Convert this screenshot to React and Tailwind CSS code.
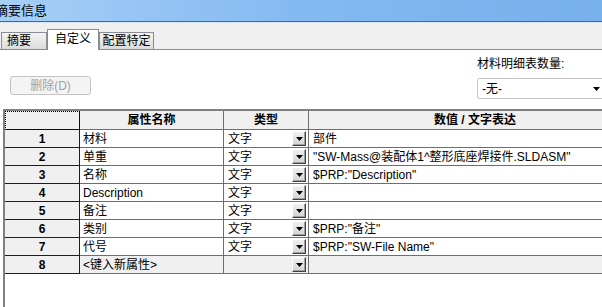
const rows = [
  { n: 1, name: '材料', type: '文字', value: '部件' },
  { n: 2, name: '单重', type: '文字', value: '"SW-Mass@装配体1^整形底座焊接件.SLDASM"' },
  { n: 3, name: '名称', type: '文字', value: '$PRP:"Description"' },
  { n: 4, name: 'Description', type: '文字', value: '' },
  { n: 5, name: '备注', type: '文字', value: '' },
  { n: 6, name: '类别', type: '文字', value: '$PRP:"备注"' },
  { n: 7, name: '代号', type: '文字', value: '$PRP:"SW-File Name"' },
];

function DropButton() {
  return (
    <div className="w-[14px] h-[15px] flex items-end justify-center pb-[4px] bg-linear-to-b from-[#f0f0f0] to-[#d4d4d4] border border-t-white border-l-white border-r-[#404040] border-b-[#404040] shadow-[inset_-1px_-1px_0_#a0a0a0]">
      <svg width="7" height="4" viewBox="0 0 7 4">
        <path d="M0 0H7L3.5 4Z" fill="#000" />
      </svg>
    </div>
  );
}

function Row({ n, name, type, value, blank }) {
  const bg = blank ? 'bg-[#f0f0f0]' : 'bg-white';
  return (
    <div className="flex h-[18px] shrink-0">
      <div className="w-[75px] shrink-0 bg-[#f0f0f0] border-r border-b border-[#1e1e1e] flex items-center justify-center font-bold">
        {n}
      </div>
      <div className={`w-[144px] shrink-0 border-r border-b border-[#6e6e6e] pl-[3px] flex items-center ${bg}`}>
        {name}
      </div>
      <div className={`w-[85px] shrink-0 border-r border-b border-[#6e6e6e] pl-[4px] pr-[2px] flex items-center justify-between ${bg}`}>
        <span>{type}</span>
        <DropButton />
      </div>
      <div className={`w-[332px] shrink-0 border-b border-[#6e6e6e] pl-[4px] flex items-center whitespace-nowrap ${bg}`}>
        {value}
      </div>
    </div>
  );
}

export default function App() {
  return (
    <div className="w-[602px] h-[307px] overflow-hidden bg-white flex flex-col text-[12px] leading-[14px] text-black [font-family:'Liberation_Sans','Noto_Sans_CJK_SC',sans-serif]">
      <div className="h-[22px] shrink-0 border-b border-[#3f6a9a] bg-linear-to-r from-[#a6cff6] via-[#84b9f1] to-[#78b0ec] flex items-center">
        <span className="-ml-[5px] text-[13px]">摘要信息</span>
      </div>

      <div className="h-[28px] shrink-0 bg-[#f0f0f0] border-t border-t-[#d9e6f4] border-b border-[#898c95] flex items-end pl-[1px]">
        <div className="w-[46px] h-[18px] -mb-px border border-[#898c95] bg-linear-to-b from-[#f3f3f3] to-[#dcdcdc] flex items-center justify-center pr-[10px]">
          摘要
        </div>
        <div className="w-[52px] h-[21px] -mb-px border border-b-0 border-[#898c95] bg-white flex items-center justify-center pb-[2px] relative">
          自定义
        </div>
        <div className="w-[55px] h-[18px] -mb-px border border-[#898c95] bg-linear-to-b from-[#f3f3f3] to-[#dcdcdc] flex items-center justify-center">
          配置特定
        </div>
      </div>

      <div className="flex-1 flex flex-col min-h-0">
        <div className="flex justify-between items-start shrink-0">
          <button className="mt-[26px] ml-[10px] w-[81px] h-[19px] border border-[#c4c4c4] rounded-[3px] bg-[#f4f4f4] text-[#a0a0a0] flex items-center justify-center">
            删除(D)
          </button>
          <div className="w-[125px] pt-[7px] flex flex-col">
            <div className="h-[14px]">材料明细表数量:</div>
            <div className="mt-[7px] h-[21px] w-[140px] border border-[#c6c6c6] rounded-[2px] bg-white flex items-center pl-[4px]">
              <span>-无-</span>
              <svg className="ml-[91px]" width="7" height="4" viewBox="0 0 7 4">
                <path d="M0 0H7L3.5 4Z" fill="#000" />
              </svg>
            </div>
          </div>
        </div>

        <div className="mt-[10px] ml-[3px] flex-1 border-l-2 border-t-2 border-[#808080] flex flex-col overflow-hidden">
          <div className="flex h-[19px] shrink-0 bg-[#f0f0f0] font-bold">
            <div className="w-[75px] shrink-0 border-r border-b border-[#1e1e1e] outline-1 outline-dotted outline-black -outline-offset-1" />
            <div className="w-[144px] shrink-0 border-r border-b border-[#6e6e6e] flex items-center justify-center">属性名称</div>
            <div className="w-[85px] shrink-0 border-r border-b border-[#6e6e6e] flex items-center justify-center">类型</div>
            <div className="w-[332px] shrink-0 border-b border-[#6e6e6e] flex items-center justify-center whitespace-nowrap">数值 / 文字表达</div>
          </div>
          {rows.map((r) => (
            <Row key={r.n} {...r} />
          ))}
          <Row n={8} name="<键入新属性>" type="" value="" blank />
        </div>
      </div>
    </div>
  );
}
